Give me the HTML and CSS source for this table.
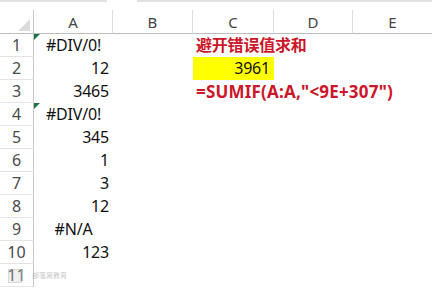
FILE: index.html
```html
<!DOCTYPE html>
<html>
<head>
<meta charset="utf-8">
<link rel="stylesheet" href="styles.css">
</head>
<body>
<div class="page">
  <div class="topstrip">
    <div class="seg seg1"></div>
    <div class="gap"></div>
    <div class="seg seg2"></div>
  </div>
  <div class="sheet">
    <div class="corner"><span class="selall"></span></div>
    <div class="colh">A</div>
    <div class="colh">B</div>
    <div class="colh">C</div>
    <div class="colh">D</div>
    <div class="colh last">E</div>

    <div class="rowh">1</div>
    <div class="cell center err">#DIV/0!</div>
    <div class="cell"></div>
    <div class="cell red">避开错误值求和</div>
    <div class="cell"></div>
    <div class="cell"></div>

    <div class="rowh">2</div>
    <div class="cell num">12</div>
    <div class="cell"></div>
    <div class="cell num yellow">3961</div>
    <div class="cell"></div>
    <div class="cell"></div>

    <div class="rowh">3</div>
    <div class="cell num">3465</div>
    <div class="cell"></div>
    <div class="cell red formula">=SUMIF(A:A,"&lt;9E+307")</div>
    <div class="cell"></div>
    <div class="cell"></div>

    <div class="rowh">4</div>
    <div class="cell center err">#DIV/0!</div>
    <div class="cell"></div>
    <div class="cell"></div>
    <div class="cell"></div>
    <div class="cell"></div>

    <div class="rowh">5</div>
    <div class="cell num">345</div>
    <div class="cell"></div><div class="cell"></div><div class="cell"></div><div class="cell"></div>

    <div class="rowh">6</div>
    <div class="cell num">1</div>
    <div class="cell"></div><div class="cell"></div><div class="cell"></div><div class="cell"></div>

    <div class="rowh">7</div>
    <div class="cell num">3</div>
    <div class="cell"></div><div class="cell"></div><div class="cell"></div><div class="cell"></div>

    <div class="rowh">8</div>
    <div class="cell num">12</div>
    <div class="cell"></div><div class="cell"></div><div class="cell"></div><div class="cell"></div>

    <div class="rowh">9</div>
    <div class="cell center">#N/A</div>
    <div class="cell"></div><div class="cell"></div><div class="cell"></div><div class="cell"></div>

    <div class="rowh">10</div>
    <div class="cell num">123</div>
    <div class="cell"></div><div class="cell"></div><div class="cell"></div><div class="cell"></div>

    <div class="rowh">11</div>
    <div class="cell"></div>
    <div class="cell"></div><div class="cell"></div><div class="cell"></div><div class="cell"></div>
  </div>
  <div class="watermark"><span class="wm-icon"></span><span class="wm-text">部落窝教育</span></div>
</div>
</body>
</html>
```

FILE: styles.css
```css
html, body {
  margin: 0;
  padding: 0;
  background: #ffffff;
}
.page {
  position: relative;
  width: 432px;
  height: 289px;
  overflow: hidden;
  font-family: "Noto Sans", "Noto Sans CJK SC", sans-serif;
}
.topstrip {
  display: flex;
  height: 10px;
  align-items: flex-start;
}
.seg {
  height: 2px;
  background: #e2e2e2;
}
.seg1 { width: 107px; }
.gap { width: 30px; }
.seg2 { flex: 1; }

.sheet {
  display: grid;
  grid-template-columns: 34px 79px 80px 81px 79px 79px;
  grid-template-rows: 24px repeat(11, 23px);
}
.corner {
  position: relative;
  border-right: 1px solid #c8c8c8;
  border-bottom: 1px solid #bdbdbd;
}
.selall {
  position: absolute;
  right: 3px;
  bottom: 2px;
  width: 0;
  height: 0;
  border-left: 12px solid transparent;
  border-bottom: 12px solid #dcdcdc;
}
.colh {
  border-bottom: 1px solid #bdbdbd;
  border-right: 1px solid #dedede;
  color: #444;
  font-size: 15px;
  text-align: center;
  line-height: 23px;
  padding-top: 1px;
  box-sizing: border-box;
}
.colh.last { border-right: none; }
.rowh {
  border-right: 1px solid #c8c8c8;
  border-bottom: 1px solid #e4e4e4;
  color: #4a4a4a;
  font-size: 16px;
  line-height: 23px;
  text-align: center;
}
.cell {
  position: relative;
  font-size: 16px;
  line-height: 23px;
  color: #111;
  white-space: nowrap;
  letter-spacing: -0.2px;
}
.num {
  text-align: right;
  padding-right: 4px;
}
.center {
  text-align: center;
}
.err::before {
  content: "";
  position: absolute;
  left: 0;
  top: 0;
  width: 0;
  height: 0;
  border-top: 6px solid #1f7244;
  border-right: 6px solid transparent;
}
.red {
  color: #cc1629;
  font-weight: 700;
  padding-left: 3px;
  overflow: visible;
}
.formula {
  font-size: 17px;
  letter-spacing: 0.2px;
}
.yellow {
  background: #ffff00;
}
.watermark {
  position: absolute;
  left: 8px;
  top: 269px;
  display: flex;
  align-items: center;
  gap: 10px;
  opacity: 0.55;
}
.wm-icon {
  width: 14px;
  height: 14px;
  border: 1px solid #bbb;
  background: rgba(200,200,200,0.5);
  box-sizing: border-box;
}
.wm-text {
  font-size: 7px;
  color: #999;
  line-height: 14px;
}
```
